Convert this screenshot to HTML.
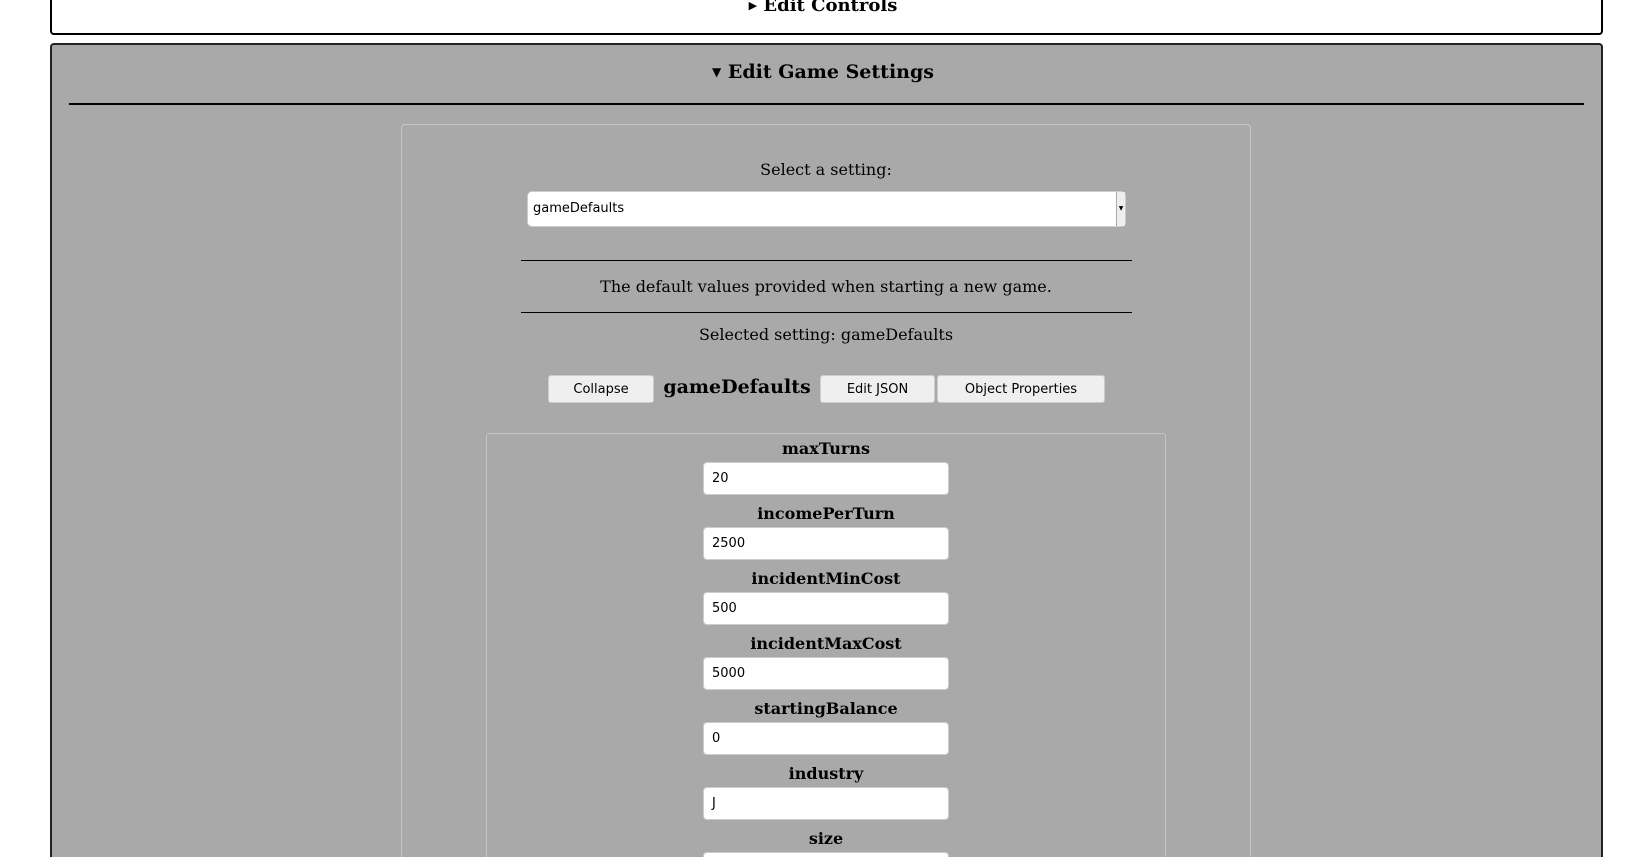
<!DOCTYPE html>
<html><head><meta charset="utf-8"><style>
*{box-sizing:border-box}
html,body{margin:0;padding:0;width:1646px;height:857px;overflow:hidden;background:#fff;font-family:"DejaVu Serif","Liberation Serif",serif;color:#000}
#w{position:relative;width:1646px;height:857px;overflow:hidden}
.abs{position:absolute}
.top{left:50px;top:0;width:1553px;height:35px;border:2px solid #000;border-top:none;border-radius:0 0 4px 4px;background:#fff}
.topt{left:0;width:1646px;top:-5px;text-align:center;font-weight:bold;font-size:18px}
.main{left:50px;top:43px;width:1553px;height:814px;border:2px solid #222;border-bottom:none;border-radius:4px 4px 0 0;background:#a9a9a9}
.title{left:0;width:1646px;top:61px;text-align:center;font-weight:bold;font-size:19px}
.hr{background:#000}
.inner{left:401px;top:124px;width:850px;height:733px;border:1px solid #c4c4c4;border-bottom:none;border-radius:4px 4px 0 0}
.c{text-align:center;left:401px;width:850px;font-size:16px}
.sel{left:527px;top:191px;width:599px;height:36px;background:#fff;border:1px solid #ccc;border-radius:5px;font-family:"DejaVu Sans","Liberation Sans",sans-serif;font-size:13px;padding:9px 5px}
.btn{top:375px;height:28px;background:#efefef;border:1px solid #ccc;border-radius:3px;font-family:"DejaVu Sans","Liberation Sans",sans-serif;font-size:13px;text-align:center;line-height:28px}
.props{left:486px;top:433px;width:680px;height:424px;border:1px solid #c4c4c4;border-bottom:none;border-radius:3px 3px 0 0}
.lab{left:486px;width:680px;text-align:center;font-weight:bold;font-size:16px}
.inp{left:703px;width:246px;height:33px;background:#fff;border:1px solid #ccc;border-radius:4px;font-family:"DejaVu Sans","Liberation Sans",sans-serif;font-size:13px;padding:8px 8px}
</style></head><body><div id="w">
<div class="abs top"></div>
<div class="abs topt"><span style="font-size:11px;vertical-align:2px">&#9654;</span> Edit Controls</div>
<div class="abs main"></div>
<div class="abs title"><span style="font-size:12px;vertical-align:2px">&#9660;</span> Edit Game Settings</div>
<div class="abs hr" style="left:69px;top:103px;width:1515px;height:2px"></div>
<div class="abs inner"></div>
<div class="abs c" style="top:160px">Select a setting:</div>
<div class="abs sel">gameDefaults<span style="position:absolute;right:0;top:0;width:9px;height:34px;border-left:1px solid #aaa;background:#eee;font-size:6px;line-height:34px;text-align:center">&#9660;</span></div>
<div class="abs hr" style="left:521px;top:260px;width:611px;height:1px"></div>
<div class="abs c" style="top:277px">The default values provided when starting a new game.</div>
<div class="abs hr" style="left:521px;top:312px;width:611px;height:1px"></div>
<div class="abs c" style="top:325px">Selected setting: gameDefaults</div>
<div class="abs btn" style="left:548px;width:106px">Collapse</div>
<div class="abs" style="left:660px;top:376px;width:154px;text-align:center;font-weight:bold;font-size:19px">gameDefaults</div>
<div class="abs btn" style="left:820px;width:115px">Edit JSON</div>
<div class="abs btn" style="left:937px;width:168px">Object Properties</div>
<div class="abs props"></div>
<div class="abs lab" style="top:439px">maxTurns</div>
<div class="abs inp" style="top:462px">20</div>
<div class="abs lab" style="top:504px">incomePerTurn</div>
<div class="abs inp" style="top:527px">2500</div>
<div class="abs lab" style="top:569px">incidentMinCost</div>
<div class="abs inp" style="top:592px">500</div>
<div class="abs lab" style="top:634px">incidentMaxCost</div>
<div class="abs inp" style="top:657px">5000</div>
<div class="abs lab" style="top:699px">startingBalance</div>
<div class="abs inp" style="top:722px">0</div>
<div class="abs lab" style="top:764px">industry</div>
<div class="abs inp" style="top:787px">J</div>
<div class="abs lab" style="top:829px">size</div>
<div class="abs inp" style="top:852px;height:5px;border-bottom:none;border-radius:4px 4px 0 0"></div>
</div></body></html>
